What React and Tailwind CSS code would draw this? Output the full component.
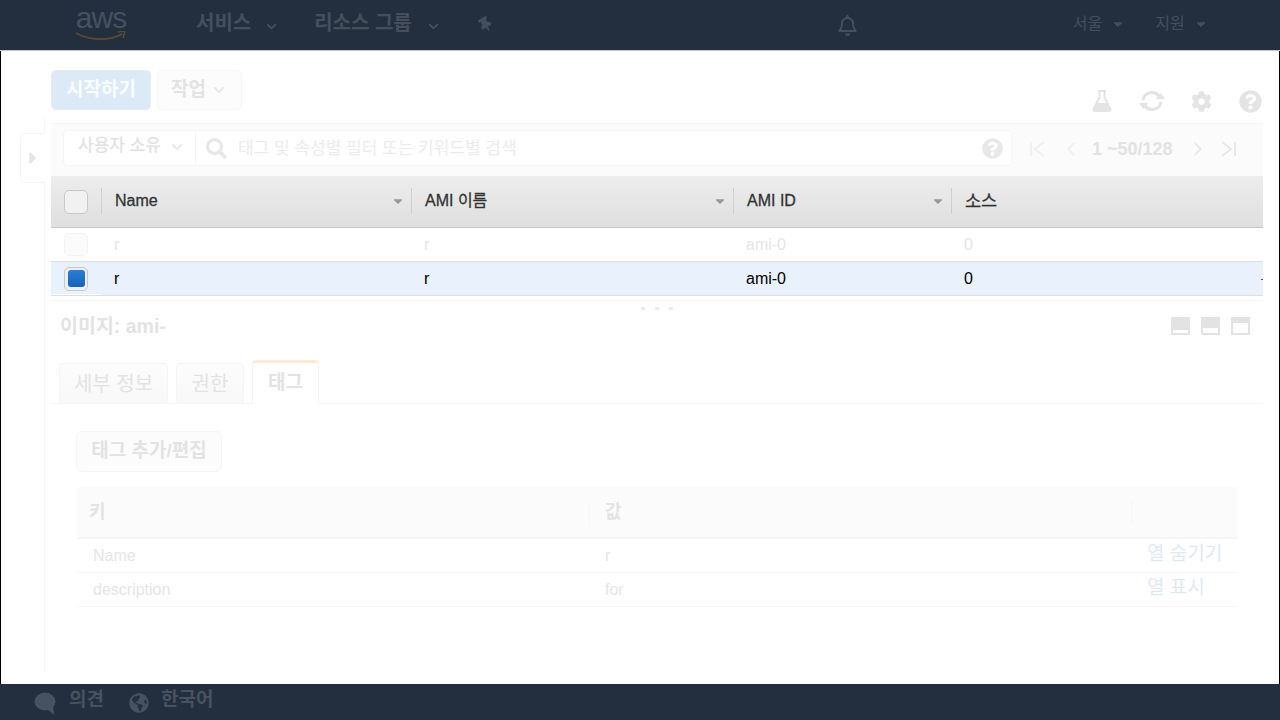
import React from 'react';
import { FaThumbtack, FaRegBell, FaCog, FaQuestionCircle, FaSearch, FaGlobeAmericas, FaCaretDown, FaCaretRight, FaChevronDown } from 'react-icons/fa';
import { ChevronDown, ChevronLeft, ChevronRight } from 'lucide-react';

const font = { fontFamily: '"Liberation Sans", "Noto Sans CJK KR", sans-serif' };

function HeaderColumn({ label, width, last }) {
  return (
    <div className={`relative flex items-center h-full pb-[1px] pl-[14px] ${last ? 'flex-1' : ''} ${width}`}>
      <span className="h-[26px] w-px bg-[#cfcfcf] absolute left-0 top-[12px]" />
      <span className={`${last ? 'text-[17.5px]' : 'text-[16px]'} text-[#333] [-webkit-text-stroke:0.3px_#333]`}>{label}</span>
      {!last && <FaCaretDown className="absolute right-[6px] top-[18px] text-[#999] text-[14px]" />}
    </div>
  );
}

function ImageRow({ selected }) {
  const text = selected ? 'text-black' : 'text-[#e6e6e6]';
  return (
    <div className={`relative flex items-center h-[34px] border-b border-[#dcdfe3] text-[16px] ${selected ? 'bg-[#e9f1fc]' : 'bg-white'} ${text}`}>
      <div className="w-[50px] pl-[13px]">
        {selected ? (
          <div className="w-6 h-6 rounded-[5px] border border-[#c8c8c8] bg-[#efefef] flex items-center justify-center">
            <div className="w-[17px] h-[17px] rounded-[3px] bg-gradient-to-b from-[#2a7ed6] to-[#1464b8]" />
          </div>
        ) : (
          <div className="w-6 h-[23px] rounded-[5px] border border-[#f3f3f3] bg-[#fbfbfb]" />
        )}
      </div>
      <div className="w-[310px] pl-[13px]">r</div>
      <div className="w-[322px] pl-[13px]">r</div>
      <div className="w-[218px] pl-[13px]">ami-0</div>
      <div className="pl-[13px]">0</div>
      {selected && <span className="absolute left-0 bottom-0 w-[50px] h-px bg-white" />}
      {selected && <span className="absolute right-0 top-[17px] w-[2px] h-px bg-[#555]" />}
    </div>
  );
}

function TagRow({ name, value, action }) {
  return (
    <div className="flex items-center h-[34px] border-b border-[#f6f6f6] text-[16px] text-[#e6e6e6]">
      <div className="w-[512px] pl-[16px]">{name}</div>
      <div className="w-[542px] pl-[16px]">{value}</div>
      <div className="flex-1 pl-[16px] text-[19px] text-[#dfe9f6] whitespace-nowrap -mt-[2px]">{action}</div>
    </div>
  );
}

function LayoutIcon({ fill }) {
  return (
    <div className="w-[19px] h-[18px] bg-[#e3e3e3] flex items-end px-[2px] pb-[2px]">
      <div className={`w-full bg-white ${fill}`} />
    </div>
  );
}

export default function App() {
  return (
    <div className="w-[1280px] h-[720px] flex flex-col overflow-hidden bg-white" style={font}>
      {/* top nav */}
      <header className="h-[51px] shrink-0 bg-[#232f3e] border-b border-[#c4c7cb] flex items-center text-[#454f5c]">
        <div className="ml-[75px] w-[52px] flex flex-col items-center">
          <span className="text-[30px] leading-[34px] tracking-[-1px] -mt-[8px] text-[#465160]">aws</span>
          <svg width="52" height="10" viewBox="0 0 52 10" className="-mt-[4px]">
            <path d="M1 2c14 8 34 8 46 1" fill="none" stroke="#5b4a33" strokeWidth="2" />
            <path d="M43 1l7-1-2 7" fill="none" stroke="#5b4a33" strokeWidth="1.5" />
          </svg>
        </div>
        <span className="ml-[69px] text-[20px] font-bold -mt-[4px]">서비스</span>
        <ChevronDown size={15} strokeWidth={3} className="ml-[13px] mt-[2px]" />
        <span className="ml-[35px] text-[20px] font-bold -mt-[4px]">리소스 그룹</span>
        <ChevronDown size={15} strokeWidth={3} className="ml-[14px] mt-[2px]" />
        <FaThumbtack size={15} className="ml-[37px] -mt-[2px] rotate-[-30deg]" />
        <FaRegBell size={21} className="ml-[344px] mt-[1px]" />
        <span className="ml-[215px] text-[16px] -mt-[2px]">서울</span>
        <FaCaretDown size={14} className="ml-[9px] -mt-[2px]" />
        <span className="ml-[30px] text-[16px] -mt-[2px]">지원</span>
        <FaCaretDown size={14} className="ml-[9px] -mt-[2px]" />
      </header>

      <main className="flex-1 min-h-0 flex flex-col border-x border-black bg-white">
        <div className="flex pl-[50px] pt-[19px] gap-[6px] h-[66px] shrink-0 relative">
          <button className="w-[100px] h-10 rounded-[5px] bg-[#dce9f7] border border-[#e3edf9] text-[19px] font-bold text-[#fbfcfe]">시작하기</button>
          <button className="w-[85px] h-10 rounded-[5px] bg-[#fcfcfc] border border-[#f6f6f6] text-[19px] font-bold text-[#e3e3e3] flex items-center pl-[13px] gap-[7px]">
            작업 <FaChevronDown size={12} className="text-[#e8e8e8]" />
          </button>
          <div className="ml-auto mr-[17px] mt-[20px] flex items-center text-[#e4e4e4] h-[22px] self-start">
            <svg width="22" height="22" viewBox="0 0 22 22" className="mr-[26px]">
              <path d="M7 1h8M8.500 1.500v6L2.500 19q-.5 2 1.500 2h14q2 0 1.500-2l-6-11.500v-6" fill="none" stroke="#e4e4e4" strokeWidth="2" />
              <path d="M6 13h10l4 8H2z" fill="#e4e4e4" />
            </svg>
            <svg width="26" height="24" viewBox="0 0 26 24" fill="none" className="mr-[26px]">
              <path d="M4 11a9 9 0 0 1 16-4" stroke="#e4e4e4" strokeWidth="3" />
              <path d="M22 13a9 9 0 0 1-16 4" stroke="#e4e4e4" strokeWidth="3" />
              <path d="M17 10h9l-4.500-6zM0 14h9l-4.500 6z" fill="#e4e4e4" />
            </svg>
            <FaCog size={21} className="mr-[27px]" />
            <FaQuestionCircle size={23} />
          </div>
        </div>

        <div className="flex-1 flex mb-[12px] min-h-0">
          {/* collapsed side nav */}
          <div className="w-[44px] shrink-0 border-r border-[#f6f6f6] pt-[16px] pl-[19px]">
            <div className="w-[25px] h-[50px] border border-r-0 border-[#f5f5f5] rounded-l-[5px] bg-white flex items-center justify-center">
              <FaCaretRight size={20} className="text-[#e6e6e6]" />
            </div>
          </div>

          <div className="flex-1 pl-[6px] pr-[16px] pt-[6px] min-w-0">
            {/* filter bar */}
            <div className="h-[53px] bg-[#fbfbfb] border-t border-[#f5f5f5] flex items-start pl-[12px] pt-[6px]">
              <div className="w-[949px] h-[36px] bg-white border border-[#f5f5f5] rounded-[4px] flex items-center">
                <div className="w-[132px] h-full border-r border-[#f5f5f5] flex items-center pl-[14px] gap-[10px] text-[17px] text-[#e2e2e2]">
                  <span className="-mt-[4px] font-medium whitespace-nowrap">사용자 소유</span>
                  <FaChevronDown size={12} className="-mt-[2px] text-[#e8e8e8]" />
                </div>
                <FaSearch size={21} className="ml-[10px] text-[#e8e8e8]" />
                <span className="ml-[11px] mt-[2px] text-[17px] text-[#ececec]">태그 및 속성별 필터 또는 키워드별 검색</span>
                <FaQuestionCircle size={21} className="ml-auto mr-[8px] text-[#e8e8e8]" />
              </div>
              <div className="flex items-center h-[36px] mt-[1px] text-[#e8e8e8] ml-[16px]">
                <svg width="20" height="20" viewBox="0 0 20 20" fill="none" stroke="#f0f0f0" strokeWidth="2" className="mr-[12px]">
                  <path d="M3 3v14M16 3l-9 7 9 7" />
                </svg>
                <ChevronLeft size={22} className="text-[#f0f0f0] mr-[10px]" />
                <span className="text-[18px] font-bold text-[#e2e2e2] mr-[14px]">1 ~50/128</span>
                <ChevronRight size={22} className="mr-[9px]" />
                <svg width="20" height="20" viewBox="0 0 20 20" fill="none" stroke="#e8e8e8" strokeWidth="2">
                  <path d="M4 3l9 7-9 7M17 3v14" />
                </svg>
              </div>
            </div>

            {/* images table */}
            <div className="flex h-[52px] bg-gradient-to-b from-[#ededed] to-[#dfdfdf] border-b border-[#c9c9c9]">
              <div className="w-[50px] pl-[13px] pt-[14px]">
                <div className="w-6 h-6 rounded-[5px] border border-[#c8c8c8] bg-[#f1f1f1]" />
              </div>
              <HeaderColumn label="Name" width="w-[310px]" />
              <HeaderColumn label="AMI 이름" width="w-[322px]" />
              <HeaderColumn label="AMI ID" width="w-[218px]" />
              <HeaderColumn label="소스" last />
            </div>
            <ImageRow />
            <ImageRow selected />

            {/* details pane */}
            <div className="mt-[4px] border-t border-[#f6f6f6] h-[61px] flex items-start justify-between pt-[16px] relative">
              <div className="absolute left-[590px] top-[6px] flex gap-[10px]">
                <span className="w-[4px] h-[3px] bg-[#ececec]" />
                <span className="w-[4px] h-[3px] bg-[#ececec]" />
                <span className="w-[4px] h-[3px] bg-[#ececec]" />
              </div>
              <span className="ml-[9px] text-[19.5px] font-bold text-[#e3e3e3] leading-[18px]">이미지: ami-</span>
              <div className="flex gap-[11px] mr-[13px]">
                <LayoutIcon fill="h-[3px]" />
                <LayoutIcon fill="h-[5px]" />
                <LayoutIcon fill="h-[10px]" />
              </div>
            </div>

            <div className="h-[43px] flex items-end gap-[8px] pl-[8px] border-b border-[#f6f6f6]">
              <div className="w-[109px] h-[40px] rounded-t-[4px] border border-b-0 border-[#f5f5f5] bg-gradient-to-b from-[#fcfcfc] to-[#f8f8f8] flex items-center justify-center text-[20px] text-[#e3e3e3]">세부 정보</div>
              <div className="w-[68px] h-[40px] rounded-t-[4px] border border-b-0 border-[#f5f5f5] bg-gradient-to-b from-[#fcfcfc] to-[#f8f8f8] flex items-center justify-center text-[20px] text-[#e3e3e3]">권한</div>
              <div className="w-[67px] h-[44px] -mb-px rounded-t-[4px] border-x border-[#f5f5f5] border-t-[3px] border-t-[#fdecd2] bg-white flex items-center justify-center text-[19px] font-bold text-[#e3e3e3]">태그</div>
            </div>

            {/* tags */}
            <div className="pl-[25px]">
              <button className="mt-[27px] w-[146px] h-[41px] rounded-[6px] border border-[#f5f5f5] bg-[#fcfcfc] text-[19px] font-bold text-[#e3e3e3]">태그 추가/편집</button>
              <div className="mt-[15px] w-[1160px] ml-[1px]">
                <div className="flex items-center h-[52px] bg-[#fbfbfb] border-b-2 border-[#f6f6f6] text-[18px] font-bold text-[#e3e3e3]">
                  <div className="w-[512px] pl-[12px]">키</div>
                  <div className="w-[542px] pl-[15px] border-l border-[#f7f7f7]">값</div>
                  <div className="h-[22px] border-l border-[#f4f4f4]" />
                </div>
                <TagRow name="Name" value="r" action="열 숨기기" />
                <TagRow name="description" value="for" action="열 표시" />
              </div>
            </div>
          </div>
        </div>
      </main>

      {/* footer */}
      <footer className="h-[36px] shrink-0 bg-[#232f3e] flex items-center text-[#48525f]">
        <svg width="22" height="23" viewBox="0 0 22 23" className="ml-[34px] mt-[3px]">
          <ellipse cx="11" cy="9.500" rx="10.500" ry="9" fill="#46525f" />
          <path d="M12 16l8 7-1-10z" fill="#46525f" />
        </svg>
        <span className="ml-[13px] text-[19px] font-bold -mt-[3px]">의견</span>
        <FaGlobeAmericas size={20} className="ml-[25px] mt-[1px] text-[#46525f]" />
        <span className="ml-[12px] text-[19px] font-bold -mt-[3px]">한국어</span>
      </footer>
    </div>
  );
}
